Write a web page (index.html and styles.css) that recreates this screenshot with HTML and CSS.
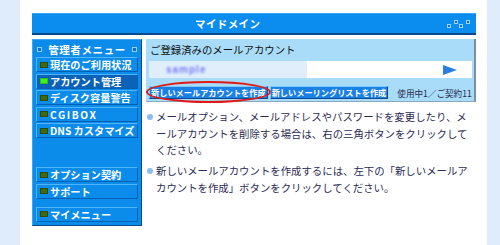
FILE: index.html
```html
<!DOCTYPE html>
<html lang="ja">
<head>
<meta charset="utf-8">
<link rel="stylesheet" href="styles.css">
</head>
<body>
<div class="page">
  <div class="header">
    <span class="header-title">マイドメイン</span>
    <svg class="header-deco" width="26" height="12" viewBox="0 0 26 12">
      <rect x="1.5" y="6.5" width="3" height="3" />
      <rect x="8.5" y="2.5" width="3" height="3" />
      <rect x="13.5" y="6.5" width="3" height="3" />
      <rect x="20.5" y="2.5" width="3" height="3" />
    </svg>
  </div>
  <div class="body">
    <nav class="menu">
      <div class="menu-title"><span class="sq"></span><span>管理者メニュー</span><span class="sq"></span></div>
      <ul class="menu-group">
        <li class="item"><span class="led"></span>現在のご利用状況</li>
        <li class="item is-active"><span class="led"></span>アカウント管理</li>
        <li class="item"><span class="led"></span>ディスク容量警告</li>
        <li class="item latin"><span class="led"></span>CGIBOX</li>
        <li class="item"><span class="led"></span>DNS カスタマイズ</li>
      </ul>
      <ul class="menu-group group-gap">
        <li class="item"><span class="led"></span>オプション契約</li>
        <li class="item"><span class="led"></span>サポート</li>
      </ul>
      <ul class="menu-group group-gap-sm">
        <li class="item"><span class="led"></span>マイメニュー</li>
      </ul>
    </nav>
    <div class="content">
      <div class="panel">
        <div class="panel-title">ご登録済みのメールアカウント</div>
        <div class="acct-row">
          <div class="acct-name"><span class="blurred">sample</span></div>
          <div class="acct-action"><span class="tri"></span></div>
        </div>
        <div class="btn-row">
          <span class="btn btn-circled">新しいメールアカウントを作成</span>
          <span class="btn">新しいメーリングリストを作成</span>
          <span class="usage">使用中1／ご契約11</span>
        </div>
      </div>
      <ul class="notes">
        <li>メールオプション、メールアドレスやパスワードを変更したり、メールアカウントを削除する場合は、右の三角ボタンをクリックしてください。</li>
        <li>新しいメールアカウントを作成するには、左下の「新しいメールアカウントを作成」ボタンをクリックしてください。</li>
      </ul>
    </div>
  </div>
</div>
</body>
</html>
```

FILE: styles.css
```css
html, body {
  margin: 0;
  padding: 0;
}
body {
  background: #dfecfb;
  font-family: "Noto Sans CJK JP", "Noto Sans", sans-serif;
  width: 500px;
  height: 245px;
  overflow: hidden;
}
.page {
  margin-left: 20px;
  width: 467px;
  height: 245px;
  background: #fff;
  box-sizing: border-box;
  padding: 13px 0 0 12px;
}
.header {
  width: 444px;
  height: 22px;
  box-sizing: border-box;
  background: #0b8cef;
  border-top: 1px solid #3aa8fa;
  border-bottom: 2px solid #0a4a8a;
  display: flex;
  align-items: center;
}
.header-title {
  margin-left: 163px;
  color: #fff;
  font-weight: bold;
  font-size: 10.5px;
  letter-spacing: 0.4px;
}
.header-deco {
  margin-left: auto;
  margin-right: 4px;
}
.header-deco rect {
  fill: #0a6ed0;
  stroke: #9fd6ff;
  stroke-width: 1;
}
.body {
  display: flex;
  margin-top: 4px;
  gap: 4px;
}
.menu {
  width: 110px;
  height: 187px;
  box-sizing: border-box;
  background: #0b8bea;
  border: 1px solid;
  border-color: #3aa6f4 #0a4a90 #0a4a90 #3aa6f4;
  padding: 1px 3px 0 3px;
}
.menu-title {
  height: 16px;
  display: flex;
  align-items: center;
  justify-content: space-between;
  color: #fff;
  font-weight: bold;
  font-size: 10.5px;
  letter-spacing: 0.6px;
  padding: 0 1px;
}
.sq {
  width: 3px;
  height: 3px;
  border: 1px solid #8fd0ff;
  background: #0a6ed0;
}
.menu-group {
  list-style: none;
  margin: 0;
  padding: 0;
  display: flex;
  flex-direction: column;
  gap: 1.6px;
}
.group-gap {
  margin-top: 29px;
}
.group-gap-sm {
  margin-top: 8px;
}
.item {
  height: 15px;
  box-sizing: border-box;
  border: 1px solid;
  border-color: #4fb4fa #0660b4 #0660b4 #4fb4fa;
  background: #0b8bea;
  display: flex;
  align-items: center;
  padding-left: 3px;
  color: #fff;
  font-weight: bold;
  font-size: 10.2px;
  letter-spacing: 0;
  white-space: nowrap;
  overflow: hidden;
}
.item.latin {
  letter-spacing: 1.6px;
}
.item.is-active {
  background: #0c62b6;
}
.led {
  width: 8px;
  height: 6px;
  box-sizing: border-box;
  background: #3f6a0e;
  border: 1px solid #2c4a0a;
  margin-right: 2px;
  flex: none;
}
.is-active .led {
  background: #44ee22;
  border-color: #30c018;
}
.content {
  width: 330px;
}
.panel {
  height: 63px;
  box-sizing: border-box;
  background: #a8dcf8;
  border-right: 2px solid #7890a8;
  border-bottom: 1px solid #8aa8c4;
  padding: 0 2px 0 3px;
}
.panel-title {
  height: 22px;
  line-height: 22px;
  font-size: 10.4px;
  color: #111;
  padding-left: 1px;
}
.acct-row {
  display: flex;
  height: 17px;
}
.acct-name {
  width: 158px;
  background: #e0eefc;
  display: flex;
  align-items: center;
  padding-left: 17px;
  box-sizing: border-box;
}
.blurred {
  color: #7a7af0;
  font-size: 10px;
  font-weight: bold;
  letter-spacing: 1px;
  font-family: "Liberation Sans", sans-serif;
  filter: blur(1.2px);
}
.acct-action {
  flex: 1;
  background: #fff;
  display: flex;
  align-items: center;
  justify-content: flex-end;
  padding-right: 15px;
}
.tri {
  width: 0;
  height: 0;
  border-top: 5px solid transparent;
  border-bottom: 5px solid transparent;
  border-left: 14px solid #2a7fe0;
}
.btn-row {
  margin-top: 8px;
  display: flex;
  align-items: center;
  gap: 2px;
}
.btn {
  height: 13px;
  box-sizing: border-box;
  background: #1a80e6;
  border: 1px solid;
  border-color: #7cc8ff #0a4a90 #0a4a90 #7cc8ff;
  color: #fff;
  font-weight: bold;
  font-size: 8.2px;
  line-height: 11px;
  padding: 0 1px;
  white-space: nowrap;
}
.btn-circled {
  position: relative;
}
.btn-circled::after {
  content: "";
  position: absolute;
  left: -4px;
  right: -4px;
  top: -6px;
  bottom: -5px;
  border: 2px solid #e01818;
  border-radius: 50%;
}
.usage {
  margin-left: 7px;
  font-size: 8.6px;
  color: #2a2a50;
  white-space: nowrap;
}
.notes {
  list-style: none;
  margin: 7px 0 0 0;
  padding: 0;
}
.notes li {
  position: relative;
  padding-left: 10px;
  width: 314px;
  font-size: 10.4px;
  line-height: 16.5px;
  color: #2b2b55;
  margin-bottom: 4.5px;
}
.notes li::before {
  content: "";
  position: absolute;
  left: 1px;
  top: 5px;
  width: 6px;
  height: 6px;
  border-radius: 50%;
  background: #8cbcf0;
}
```
